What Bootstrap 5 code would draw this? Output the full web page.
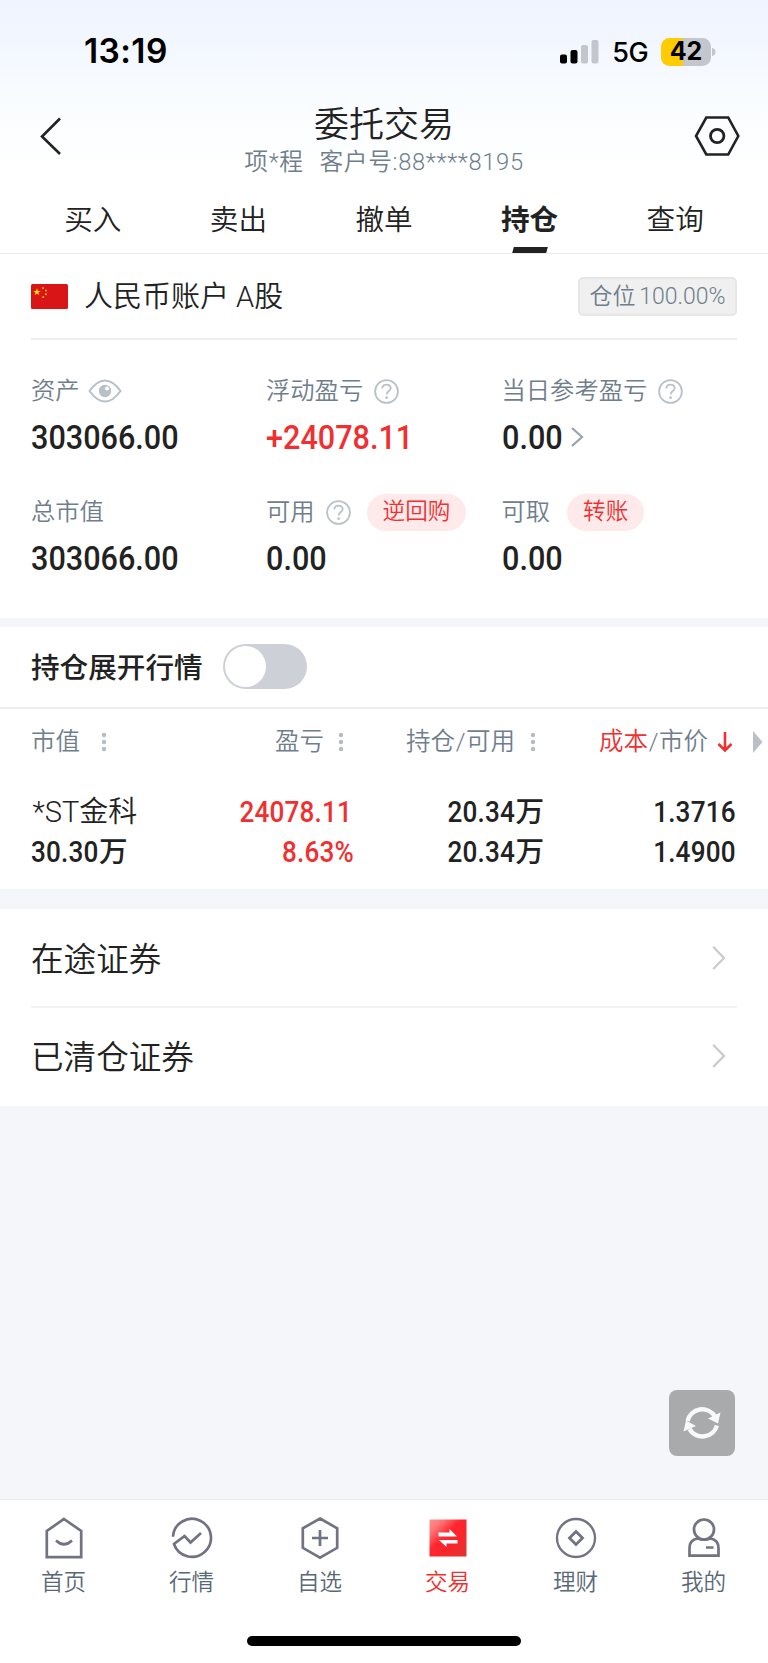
<!DOCTYPE html>
<html lang="zh-CN">
<head>
<meta charset="utf-8">
<meta name="viewport" content="width=device-width, initial-scale=1">
<title>委托交易</title>
<link rel="stylesheet" href="https://cdn.jsdelivr.net/npm/bootstrap@5.3.0/dist/css/bootstrap.min.css">
<style>
:root{--ink:#222;--slate:#6f7e8c;--red:#f03030;--line:#ececee;--page:#f4f6fa}
body{font-family:Roboto,"Noto Sans CJK SC",sans-serif;color:var(--ink);background:var(--page);font-weight:350;line-height:1}
svg{display:block;flex:none}
.app{width:768px;height:1663px;background:var(--page);overflow:hidden}
.top{height:254px;background:linear-gradient(#eff4ff 0,#f1f6ff 35px,#f9fcff 95px,#fff 170px);border-bottom:1px solid var(--line)}
.status{height:86px;padding:17px 52px 0 84px;font-family:Inter,sans-serif;color:#000}
.clock{font-size:33.5px;font-weight:600;letter-spacing:.4px;padding-top:1px}
.net{font-size:27px;font-weight:500;letter-spacing:-.6px;margin:1px 13px 0 13px}
.batt{width:50px;height:28px;border-radius:8.5px;background:linear-gradient(90deg,#ffcc00 43%,#c3c6cc 43%);font-size:25px;line-height:29px;font-weight:700}
.head{height:98px;padding:2px 28px 0 36px}
.heading{font-size:35px;line-height:44px;padding-top:8px;margin-bottom:-1px}
.sub{font-size:23.7px;line-height:30px;color:var(--slate);white-space:pre;letter-spacing:.65px;word-spacing:1.5px}
.tabs{height:69px;padding:0 20px;font-size:28.6px}
.tabs>div{flex:1 1 0;text-align:center;line-height:73px;height:69px;position:relative}
.tabs .on{font-weight:700}
.tabs .on::after{content:"";position:absolute;left:56px;bottom:0;width:34px;height:6px;background:var(--ink);transform:skewX(-15deg)}
.acct{height:86px;margin:0 31px;border-bottom:2px solid #eeeeef;font-size:29px}
.posn{width:159px;height:39px;border:2px solid #e6e6e6;border-radius:5px;background:#f0f0f0;color:var(--slate);font-size:23px;word-spacing:-2px;white-space:nowrap}
.figs{height:278px;padding:30px 31px 0;display:grid;grid-template-columns:235px 235.5px 235px;grid-auto-rows:121px}
.lab{height:42px;font-size:24.3px;color:var(--slate);white-space:nowrap}
.lab .ask{margin-left:11px}
.num{font-family:Roboto,"Noto Sans CJK SC",sans-serif;font-weight:500}
.val{height:50px;font-size:34px;letter-spacing:0}
.din{display:inline-block;transform:scaleX(.9);transform-origin:left}
.din-end{transform-origin:right}
.red{color:var(--red)}
.pill{height:37px;border-radius:19px;background:#feeaea;color:var(--red);font-size:22.6px;padding:1px 16px 0}
.strip{height:82px;padding:0 31px;margin-top:9px;border-bottom:2px solid #ededee;font-size:28.6px}
.switch{width:84px;height:45px;border-radius:23px;background:#cdd0d6;padding:2px;margin:-1px 0 0 20px}
.knob{width:41px;height:41px;border-radius:50%;background:#fff}
.tbl{height:180px;padding:0 0 0 31px}
.thd{height:66px;font-size:24.5px;color:var(--slate);white-space:nowrap}
.thd i{font-style:normal;margin:0 .6px}
.trow{height:40px;font-size:29px;white-space:nowrap}
.trow .din{letter-spacing:.2px}
.wan{font-size:28.6px}
.c1{width:200px}.c2{width:121px}.c3{width:192px}.c4{width:192px}
.more{margin-top:20px;height:197px;padding:0 31px}
.item{height:100px;font-size:32.6px;padding:0 11px 2px 0}
.item:first-child{height:97px;padding-top:3px}
.item+.item{border-top:2px solid #f3f3f4}
.refresh{width:66px;height:66px;border-radius:8px;background:#a9aaac;margin:284px 0 0 669px}
.bar{margin-top:43px;height:167px;border-top:1px solid #e9ebee;padding-top:15px}
.bar .tab{width:128px}
.bar p{margin:1px 0 0;font-size:22.6px;line-height:42px;color:#596876;text-align:center;padding-right:1px}
.bar p.red{color:var(--red)}
.homebar{width:274px;height:10px;border-radius:5px;background:#000;margin:32px auto 0}
</style>
<script src="https://cdn.jsdelivr.net/npm/bootstrap@5.3.0/dist/js/bootstrap.bundle.min.js"></script>
</head>
<body>
<svg width="0" height="0" class="position-absolute" aria-hidden="true">
<symbol id="ask" viewBox="0 0 25 25"><g fill="none" stroke="#bac1ca" stroke-width="1.8"><circle cx="12.5" cy="12.5" r="11.4"/><path d="M8.3 9.6C8.3 4.3 16.9 4.4 16.7 9.3C16.6 12 12.6 12.2 12.6 15.5"/></g><circle cx="12.6" cy="18.7" r="1.4" fill="#bac1ca"/></symbol>
<symbol id="dots" viewBox="0 0 6 20"><g fill="#b6bcc4"><circle cx="3" cy="3" r="2.2"/><circle cx="3" cy="10" r="2.2"/><circle cx="3" cy="17" r="2.2"/></g></symbol>
<symbol id="next" viewBox="0 0 14 26"><path d="M1.2 1.8L12 13L1.2 24" fill="none" stroke="#cacaca" stroke-width="2.2"/></symbol>
</svg>
<main class="app">
<header class="top">
<div class="status d-flex align-items-center">
<span class="clock me-auto">13:19</span>
<svg width="39" height="25" viewBox="0 0 39 25"><rect x="0" y="15.500" width="7" height="9" rx="2"/><rect x="10.500" y="11" width="7" height="13.500" rx="2"/><g fill="#c3c6cc"><rect x="21" y="6" width="7" height="18.500" rx="2"/><rect x="31.500" y="1" width="7" height="23.500" rx="2"/></g></svg>
<span class="net">5G</span>
<span class="batt d-flex align-items-center justify-content-center">42</span>
<svg width="4" height="10" viewBox="0 0 4 10" style="margin-left:1px"><path d="M0 1Q3.500 1.500 3.500 5T0 9Z" fill="#c3c6cc"/></svg>
</div>
<div class="head d-flex align-items-center justify-content-between">
<svg width="30" height="40" viewBox="0 0 30 40"><path d="M24 2.500L6 20.500L24 38" fill="none" stroke="#222" stroke-width="2.600"/></svg>
<div class="text-center ps-2"><div class="heading">委托交易</div><div class="sub">项*程  客户号:88****8195</div></div>
<svg width="46" height="42" viewBox="0 0 46 42"><g fill="none" stroke="#222"><path d="M12.300 2.500H34.200L44.300 21L34.200 39.500H12.300L2 21Z" stroke-width="2.600"/><circle cx="23.200" cy="21" r="6.700" stroke-width="2.800"/></g></svg>
</div>
<nav class="tabs d-flex"><div>买入</div><div>卖出</div><div>撤单</div><div class="on">持仓</div><div>查询</div></nav>
</header>
<section class="bg-white">
<div class="acct d-flex align-items-center">
<svg width="37" height="25" viewBox="0 0 37 25"><rect width="37" height="25" rx="1.500" fill="#d91518"/><path d="M6 4.200L6.900 6.900H9.700L7.400 8.600L8.300 11.300L6 9.600L3.700 11.300L4.600 8.600L2.300 6.900H5.100Z" fill="#ffe600"/><g fill="#f4c20d"><circle cx="12" cy="4" r="1"/><circle cx="15" cy="6.500" r="1"/><circle cx="15" cy="10.200" r="1"/><circle cx="12.200" cy="13" r="1"/></g></svg>
<span class="me-auto ms-3" style="padding-top:2px">人民币账户 A股</span>
<span class="posn d-flex align-items-center justify-content-center">仓位 100.00%</span>
</div>
<div class="figs">
<div><div class="lab d-flex align-items-center">资产<svg style="margin-left:8px" width="34" height="24" viewBox="0 0 34 24"><path d="M1.500 12Q9 1.500 17 1.500T32.500 12Q25 22.500 17 22.500T1.500 12Z" fill="none" stroke="#b9c0c8" stroke-width="2"/><circle cx="17" cy="12" r="6.200" fill="#b9c0c8"/><circle cx="19" cy="9.500" r="2" fill="#fff"/></svg></div><div class="val num d-flex align-items-center"><span class="din">303066.00</span></div></div>
<div><div class="lab d-flex align-items-center">浮动盈亏<svg class="ask" width="25" height="25"><use href="#ask"/></svg></div><div class="val num red d-flex align-items-center"><span class="din">+24078.11</span></div></div>
<div><div class="lab d-flex align-items-center">当日参考盈亏<svg class="ask" width="25" height="25"><use href="#ask"/></svg></div><div class="val num d-flex align-items-center"><span class="din">0.00</span><svg style="margin-left:1px" width="14" height="22" viewBox="0 0 14 22"><path d="M2 2L12 11L2 20" fill="none" stroke="#98a3ae" stroke-width="2.200"/></svg></div></div>
<div><div class="lab d-flex align-items-center">总市值</div><div class="val num d-flex align-items-center"><span class="din">303066.00</span></div></div>
<div><div class="lab d-flex align-items-center">可用<svg class="ask" width="25" height="25"><use href="#ask"/></svg><span class="pill ms-3 d-flex align-items-center">逆回购</span></div><div class="val num d-flex align-items-center"><span class="din">0.00</span></div></div>
<div><div class="lab d-flex align-items-center">可取<span class="pill d-flex align-items-center" style="margin-left:17px">转账</span></div><div class="val num d-flex align-items-center"><span class="din">0.00</span></div></div>
</div>
</section>
<section class="strip bg-white d-flex align-items-center">
<span style="font-weight:500;padding-top:2px">持仓展开行情</span>
<div class="switch" role="switch" aria-checked="false"><div class="knob"></div></div>
</section>
<section class="tbl bg-white">
<div class="thd d-flex align-items-center">
<div class="c1 d-flex align-items-center">市值<svg style="margin-left:21px" width="6" height="20"><use href="#dots"/></svg></div>
<div class="c2 d-flex align-items-center justify-content-end pe-2">盈亏<svg style="margin-left:14px" width="6" height="20"><use href="#dots"/></svg></div>
<div class="c3 d-flex align-items-center justify-content-end pe-2">持仓<i>/</i>可用<svg style="margin-left:15px" width="6" height="20"><use href="#dots"/></svg></div>
<div class="c4 d-flex align-items-center justify-content-end" style="padding-right:3px"><span class="red">成本</span><i>/</i>市价<svg style="margin-left:9px" width="16" height="22" viewBox="0 0 16 22"><path d="M8 1V19M1.500 13L8 19.500L14.500 13" fill="none" stroke="#f03030" stroke-width="2.600"/></svg></div>
<svg style="margin-left:17px" width="10" height="22" viewBox="0 0 10 22"><path d="M0 0L9.500 11L0 22Z" fill="#b9c0c8"/></svg>
</div>
<div class="trow d-flex align-items-center" style="margin-top:17px"><div class="c1" style="padding-left:1.500px">*ST金科</div><div class="c2 d-flex justify-content-end red num"><span class="din din-end">24078.11</span></div><div class="c3 text-end num"><span class="din din-end">20.34</span><span class="wan">万</span></div><div class="c4 text-end num"><span class="din din-end">1.3716</span></div></div>
<div class="trow d-flex align-items-center num"><div class="c1"><span class="din" style="margin-right:-7px">30.30</span><span class="wan">万</span></div><div class="c2 d-flex justify-content-end red"><span class="din din-end" style="margin-right:-2px">8.63%</span></div><div class="c3 text-end"><span class="din din-end">20.34</span><span class="wan">万</span></div><div class="c4 text-end"><span class="din din-end">1.4900</span></div></div>
</section>
<section class="more bg-white">
<div class="item d-flex align-items-center justify-content-between"><span class="pt-1">在途证券</span><svg width="14" height="26"><use href="#next"/></svg></div>
<div class="item d-flex align-items-center justify-content-between"><span class="pt-1">已清仓证券</span><svg width="14" height="26"><use href="#next"/></svg></div>
</section>
<button class="refresh btn p-0 border-0 d-flex align-items-center justify-content-center" aria-label="刷新"><svg width="40" height="40" viewBox="0 0 40 40"><g fill="none" stroke="#f8f9fb" stroke-width="4.500"><path d="M5.600 18A15 15 0 0 1 33 13.500"/><path d="M34.900 22.500A15 15 0 0 1 7.500 26"/></g><g fill="#f8f9fb"><path d="M38.500 9.500L36 20.500L26 15.500Z"/><path d="M1.500 29.500L4 18.500L14 24Z" transform="translate(0 -1)"/></g></svg></button>
<nav class="bar bg-white">
<div class="d-flex w-100">
<div class="tab"><svg class="mx-auto" width="44" height="46" viewBox="0 1 44 46"><g fill="none" stroke="#717382" stroke-width="2.700"><path d="M22 5L39.200 17V43.200H4.800V17Z"/><path d="M14 26.500Q22 34 30 26.500"/></g></svg><p>首页</p></div>
<div class="tab"><svg class="mx-auto" width="44" height="46" viewBox="0 1 44 46"><path d="M3 22.800A19 19 0 1 1 4 30L14.500 22L20.500 28.500L31 19" fill="none" stroke="#717382" stroke-width="2.700"/></svg><p>行情</p></div>
<div class="tab"><svg class="mx-auto" width="44" height="46" viewBox="0 1 44 46"><path d="M22 4.500L39.200 14.300V33.800L22 43.600L4.800 33.800V14.300ZM22 16V32M14 24H30" fill="none" stroke="#717382" stroke-width="2.700"/></svg><p>自选</p></div>
<div class="tab"><svg class="mx-auto" width="44" height="46" viewBox="0 1 44 46"><defs><linearGradient id="rg" x2="1" y2="1"><stop stop-color="#ff9292"/><stop offset=".2" stop-color="#ff7276"/><stop offset=".42" stop-color="#ff2830"/><stop offset=".62" stop-color="#fa242b"/><stop offset="1" stop-color="#df3531"/></linearGradient></defs><rect x="3.500" y="5.500" width="37" height="37" fill="url(#rg)"/><path d="M12.500 18.500H23.500V15L31 22.500H12.500ZM31.500 26H13L20.500 33V29.500H31.500Z" fill="#fff"/></svg><p class="red">交易</p></div>
<div class="tab"><svg class="mx-auto" width="44" height="46" viewBox="0 1 44 46"><g fill="none" stroke="#717382"><circle cx="22" cy="24" r="19" stroke-width="2.300"/><path d="M22 17.500L28.500 24L22 30.500L15.500 24Z" stroke-width="2.800"/></g></svg><p>理财</p></div>
<div class="tab"><svg class="mx-auto" width="44" height="46" viewBox="0 1 44 46"><g fill="none" stroke="#717382" stroke-width="2.700"><circle cx="22" cy="15.500" r="10"/><path d="M15.500 24.500Q7.500 26 7.500 34V41.700H36.500V34Q36.500 26 28.500 24.500Q22 27 15.500 24.500ZM24 33.500H31.500"/></g></svg><p>我的</p></div>
</div>
<div class="homebar"></div>
</nav>
</main>
</body>
</html>
